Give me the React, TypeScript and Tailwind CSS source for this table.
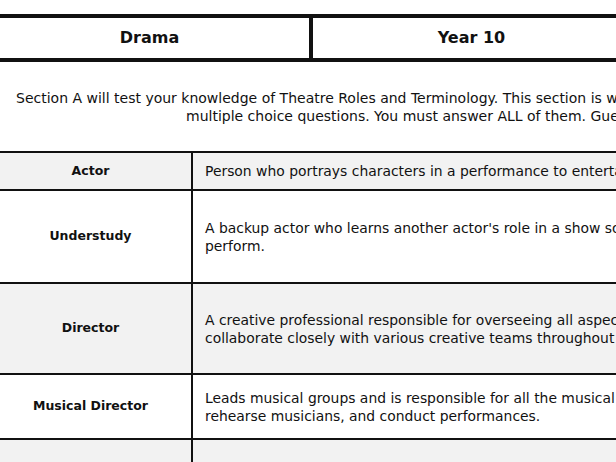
import React from 'react'

const rows = [
  {
    term: 'Actor',
    lines: ['Person who portrays characters in a performance to entertain an audience.'],
    h: 'h-[38px]',
    gray: true,
  },
  {
    term: 'Understudy',
    lines: [
      "A backup actor who learns another actor's role in a show so they can step in if the actor cannot",
      'perform.',
    ],
    h: 'h-[93px]',
    gray: false,
  },
  {
    term: 'Director',
    lines: [
      'A creative professional responsible for overseeing all aspects of a production. They',
      'collaborate closely with various creative teams throughout the rehearsal process.',
    ],
    h: 'h-[91px]',
    gray: true,
  },
  {
    term: 'Musical Director',
    lines: [
      'Leads musical groups and is responsible for all the musical aspects of a show. They select music,',
      'rehearse musicians, and conduct performances.',
    ],
    h: 'h-[65px]',
    gray: false,
  },
  {
    term: 'Stage Manager',
    lines: [
      'Organises the rehearsal schedule and runs the show from backstage during each performance.',
    ],
    h: 'h-[80px]',
    gray: true,
  },
]

export default function App() {
  return (
    <div
      className="w-[616px] h-[462px] overflow-hidden bg-white text-[#111]"
      style={{ fontFamily: '"DejaVu Sans", "Liberation Sans", sans-serif' }}
    >
      {/* Header table */}
      <div className="-ml-[10px] w-[640px] mt-[14px] flex h-[48px] border-y-4 border-[#111]">
        <div className="w-[323px] flex items-center justify-center font-bold text-[16px] border-r-4 border-[#111]">
          Drama
        </div>
        <div className="flex-1 flex items-center justify-center font-bold text-[16px]">
          Year 10
        </div>
      </div>

      {/* Intro */}
      <div className="mt-[27px] text-[14px] leading-[18px] whitespace-nowrap">
        <div className="ml-[16px]">
          Section A will test your knowledge of Theatre Roles and Terminology. This section is worth 10 marks and
        </div>
        <div className="ml-[186px]">
          multiple choice questions. You must answer ALL of them. Guess if you are unsure.
        </div>
      </div>

      {/* Terms table */}
      <div className="-ml-[10px] w-[800px] mt-[26px] border-t-2 border-[#111]">
        {rows.map((r) => (
          <div
            key={r.term}
            className={`flex border-b-2 border-[#111] ${r.h} ${r.gray ? 'bg-[#f2f2f2]' : 'bg-white'}`}
          >
            <div className="w-[203px] shrink-0 flex items-center justify-center font-bold text-[12.5px] border-r-2 border-[#111]">
              {r.term}
            </div>
            <div className="flex-1 flex flex-col justify-center pl-[12px] text-[13.9px] leading-[18px] whitespace-nowrap">
              {r.lines.map((l) => (
                <div key={l}>{l}</div>
              ))}
            </div>
          </div>
        ))}
      </div>
    </div>
  )
}
